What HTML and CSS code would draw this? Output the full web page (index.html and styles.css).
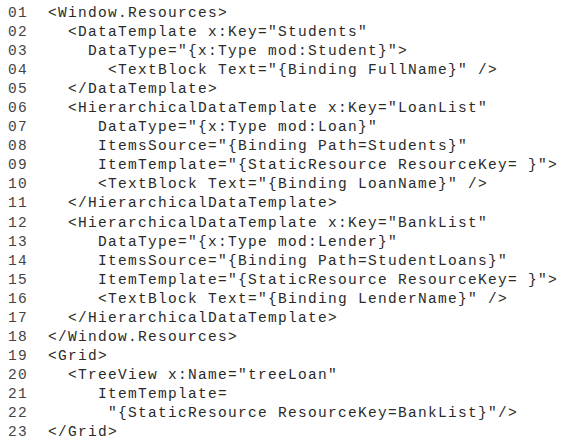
FILE: index.html
```html
<!DOCTYPE html>
<html>
<head>
<meta charset="utf-8">
<link rel="stylesheet" href="styles.css">
</head>
<body>
<div class="listing">
<div class="line"><span class="num">01</span><span class="code">&lt;Window.Resources&gt;</span></div>
<div class="line"><span class="num">02</span><span class="code">  &lt;DataTemplate x:Key="Students"</span></div>
<div class="line"><span class="num">03</span><span class="code">    DataType="{x:Type mod:Student}"&gt;</span></div>
<div class="line"><span class="num">04</span><span class="code">      &lt;TextBlock Text="{Binding FullName}" /&gt;</span></div>
<div class="line"><span class="num">05</span><span class="code">  &lt;/DataTemplate&gt;</span></div>
<div class="line"><span class="num">06</span><span class="code">  &lt;HierarchicalDataTemplate x:Key="LoanList"</span></div>
<div class="line"><span class="num">07</span><span class="code">     DataType="{x:Type mod:Loan}"</span></div>
<div class="line"><span class="num">08</span><span class="code">     ItemsSource="{Binding Path=Students}"</span></div>
<div class="line"><span class="num">09</span><span class="code">     ItemTemplate="{StaticResource ResourceKey= }"&gt;</span></div>
<div class="line"><span class="num">10</span><span class="code">     &lt;TextBlock Text="{Binding LoanName}" /&gt;</span></div>
<div class="line"><span class="num">11</span><span class="code">  &lt;/HierarchicalDataTemplate&gt;</span></div>
<div class="line"><span class="num">12</span><span class="code">  &lt;HierarchicalDataTemplate x:Key="BankList"</span></div>
<div class="line"><span class="num">13</span><span class="code">     DataType="{x:Type mod:Lender}"</span></div>
<div class="line"><span class="num">14</span><span class="code">     ItemsSource="{Binding Path=StudentLoans}"</span></div>
<div class="line"><span class="num">15</span><span class="code">     ItemTemplate="{StaticResource ResourceKey= }"&gt;</span></div>
<div class="line"><span class="num">16</span><span class="code">     &lt;TextBlock Text="{Binding LenderName}" /&gt;</span></div>
<div class="line"><span class="num">17</span><span class="code">  &lt;/HierarchicalDataTemplate&gt;</span></div>
<div class="line"><span class="num">18</span><span class="code">&lt;/Window.Resources&gt;</span></div>
<div class="line"><span class="num">19</span><span class="code">&lt;Grid&gt;</span></div>
<div class="line"><span class="num">20</span><span class="code">  &lt;TreeView x:Name="treeLoan"</span></div>
<div class="line"><span class="num">21</span><span class="code">     ItemTemplate=</span></div>
<div class="line"><span class="num">22</span><span class="code">      "{StaticResource ResourceKey=BankList}"/&gt;</span></div>
<div class="line"><span class="num">23</span><span class="code">&lt;/Grid&gt;</span></div>
</div>
</body>
</html>
```
FILE: styles.css
```css
html, body {
  margin: 0;
  padding: 0;
  background: #ffffff;
}
.listing {
  padding: 4px 0 0 8px;
  font-family: "Liberation Mono", "Courier New", monospace;
  font-size: 14.5px;
  letter-spacing: 1.3px;
  line-height: 19.05px;
  color: #2a2a2a;
}
.line {
  display: flex;
  white-space: pre;
}
.num {
  width: 40px;
  flex: none;
  color: #444444;
}
.code {
  white-space: pre;
}
```
